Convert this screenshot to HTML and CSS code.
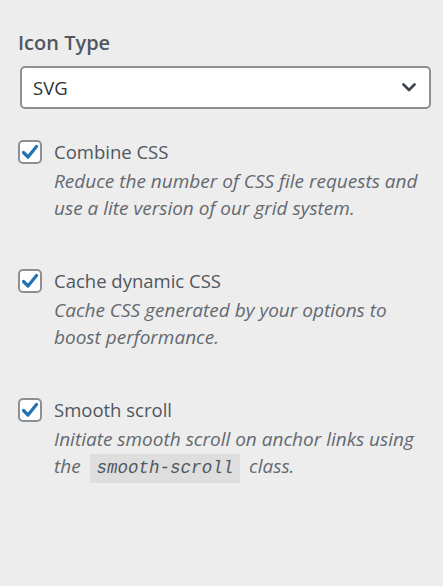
FILE: index.html
```html
<!DOCTYPE html>
<html>
<head>
<meta charset="utf-8">
<link rel="stylesheet" href="styles.css">
</head>
<body>
<div class="panel">
  <div class="field">
    <label class="heading">Icon Type</label>
    <div class="select">
      <span>SVG</span>
      <svg class="chev" width="14" height="9" viewBox="0 0 14 9"><path d="M1.5 1.5 L7 7 L12.5 1.5" fill="none" stroke="#3c434a" stroke-width="2.6" stroke-linecap="round" stroke-linejoin="round"/></svg>
    </div>
  </div>

  <div class="option">
    <span class="box"><svg width="18" height="16" viewBox="0 0 18 16"><path d="M2.5 8.5 L7 13 L15.5 2.5" fill="none" stroke="#2271b1" stroke-width="3.2" stroke-linecap="round" stroke-linejoin="round"/></svg></span>
    <div class="text">
      <div class="label">Combine CSS</div>
      <p class="desc">Reduce the number of CSS file requests and use a lite version of our grid system.</p>
    </div>
  </div>

  <div class="option">
    <span class="box"><svg width="18" height="16" viewBox="0 0 18 16"><path d="M2.5 8.5 L7 13 L15.5 2.5" fill="none" stroke="#2271b1" stroke-width="3.2" stroke-linecap="round" stroke-linejoin="round"/></svg></span>
    <div class="text">
      <div class="label">Cache dynamic CSS</div>
      <p class="desc">Cache CSS generated by your options to boost performance.</p>
    </div>
  </div>

  <div class="option">
    <span class="box"><svg width="18" height="16" viewBox="0 0 18 16"><path d="M2.5 8.5 L7 13 L15.5 2.5" fill="none" stroke="#2271b1" stroke-width="3.2" stroke-linecap="round" stroke-linejoin="round"/></svg></span>
    <div class="text">
      <div class="label">Smooth scroll</div>
      <p class="desc">Initiate smooth scroll on anchor links using the <code>smooth-scroll</code> class.</p>
    </div>
  </div>
</div>
</body>
</html>
```

FILE: styles.css
```css
html, body {
  margin: 0;
  padding: 0;
  background: #ededed;
}
body {
  font-family: "Open Sans", "Noto Sans", sans-serif;
  color: #3c434a;
}
.panel {
  padding: 28px 10px 0 18px;
  display: flex;
  flex-direction: column;
}
.field {
  display: flex;
  flex-direction: column;
  margin-bottom: 30px;
}
.heading {
  font-size: 20px;
  font-weight: 600;
  color: #50575e;
  line-height: 30px;
  margin-bottom: 8px;
}
.select {
  margin-left: 2px;
  margin-right: 2px;
  height: 43px;
  box-sizing: border-box;
  border: 2px solid #8c8f94;
  border-radius: 5px;
  background: #fff;
  display: flex;
  align-items: center;
  justify-content: space-between;
  padding: 0 13px 0 11px;
  font-size: 18.5px;
  color: #2c3338;
}
.option {
  display: flex;
  gap: 12px;
  margin-bottom: 46px;
}
.box {
  flex: none;
  width: 24px;
  height: 24px;
  box-sizing: border-box;
  border: 2px solid #8c8f94;
  border-radius: 5px;
  background: #fff;
  display: flex;
  align-items: center;
  justify-content: center;
  margin-top: 1px;
}
.text {
  display: flex;
  flex-direction: column;
}
.label {
  font-size: 18.5px;
  line-height: 26px;
  color: #50575e;
}
.desc {
  margin: 3px 0 0;
  font-size: 19px;
  line-height: 27px;
  font-style: italic;
  color: #646970;
}
code {
  font-family: "Liberation Mono", monospace;
  font-style: italic;
  font-size: 17.5px;
  background: #dedede;
  padding: 0 7px;
  margin: 0 4px;
  color: #50575e;
  box-shadow: 0 -4px 0 #dedede, 0 5px 0 #dedede;
}
```
